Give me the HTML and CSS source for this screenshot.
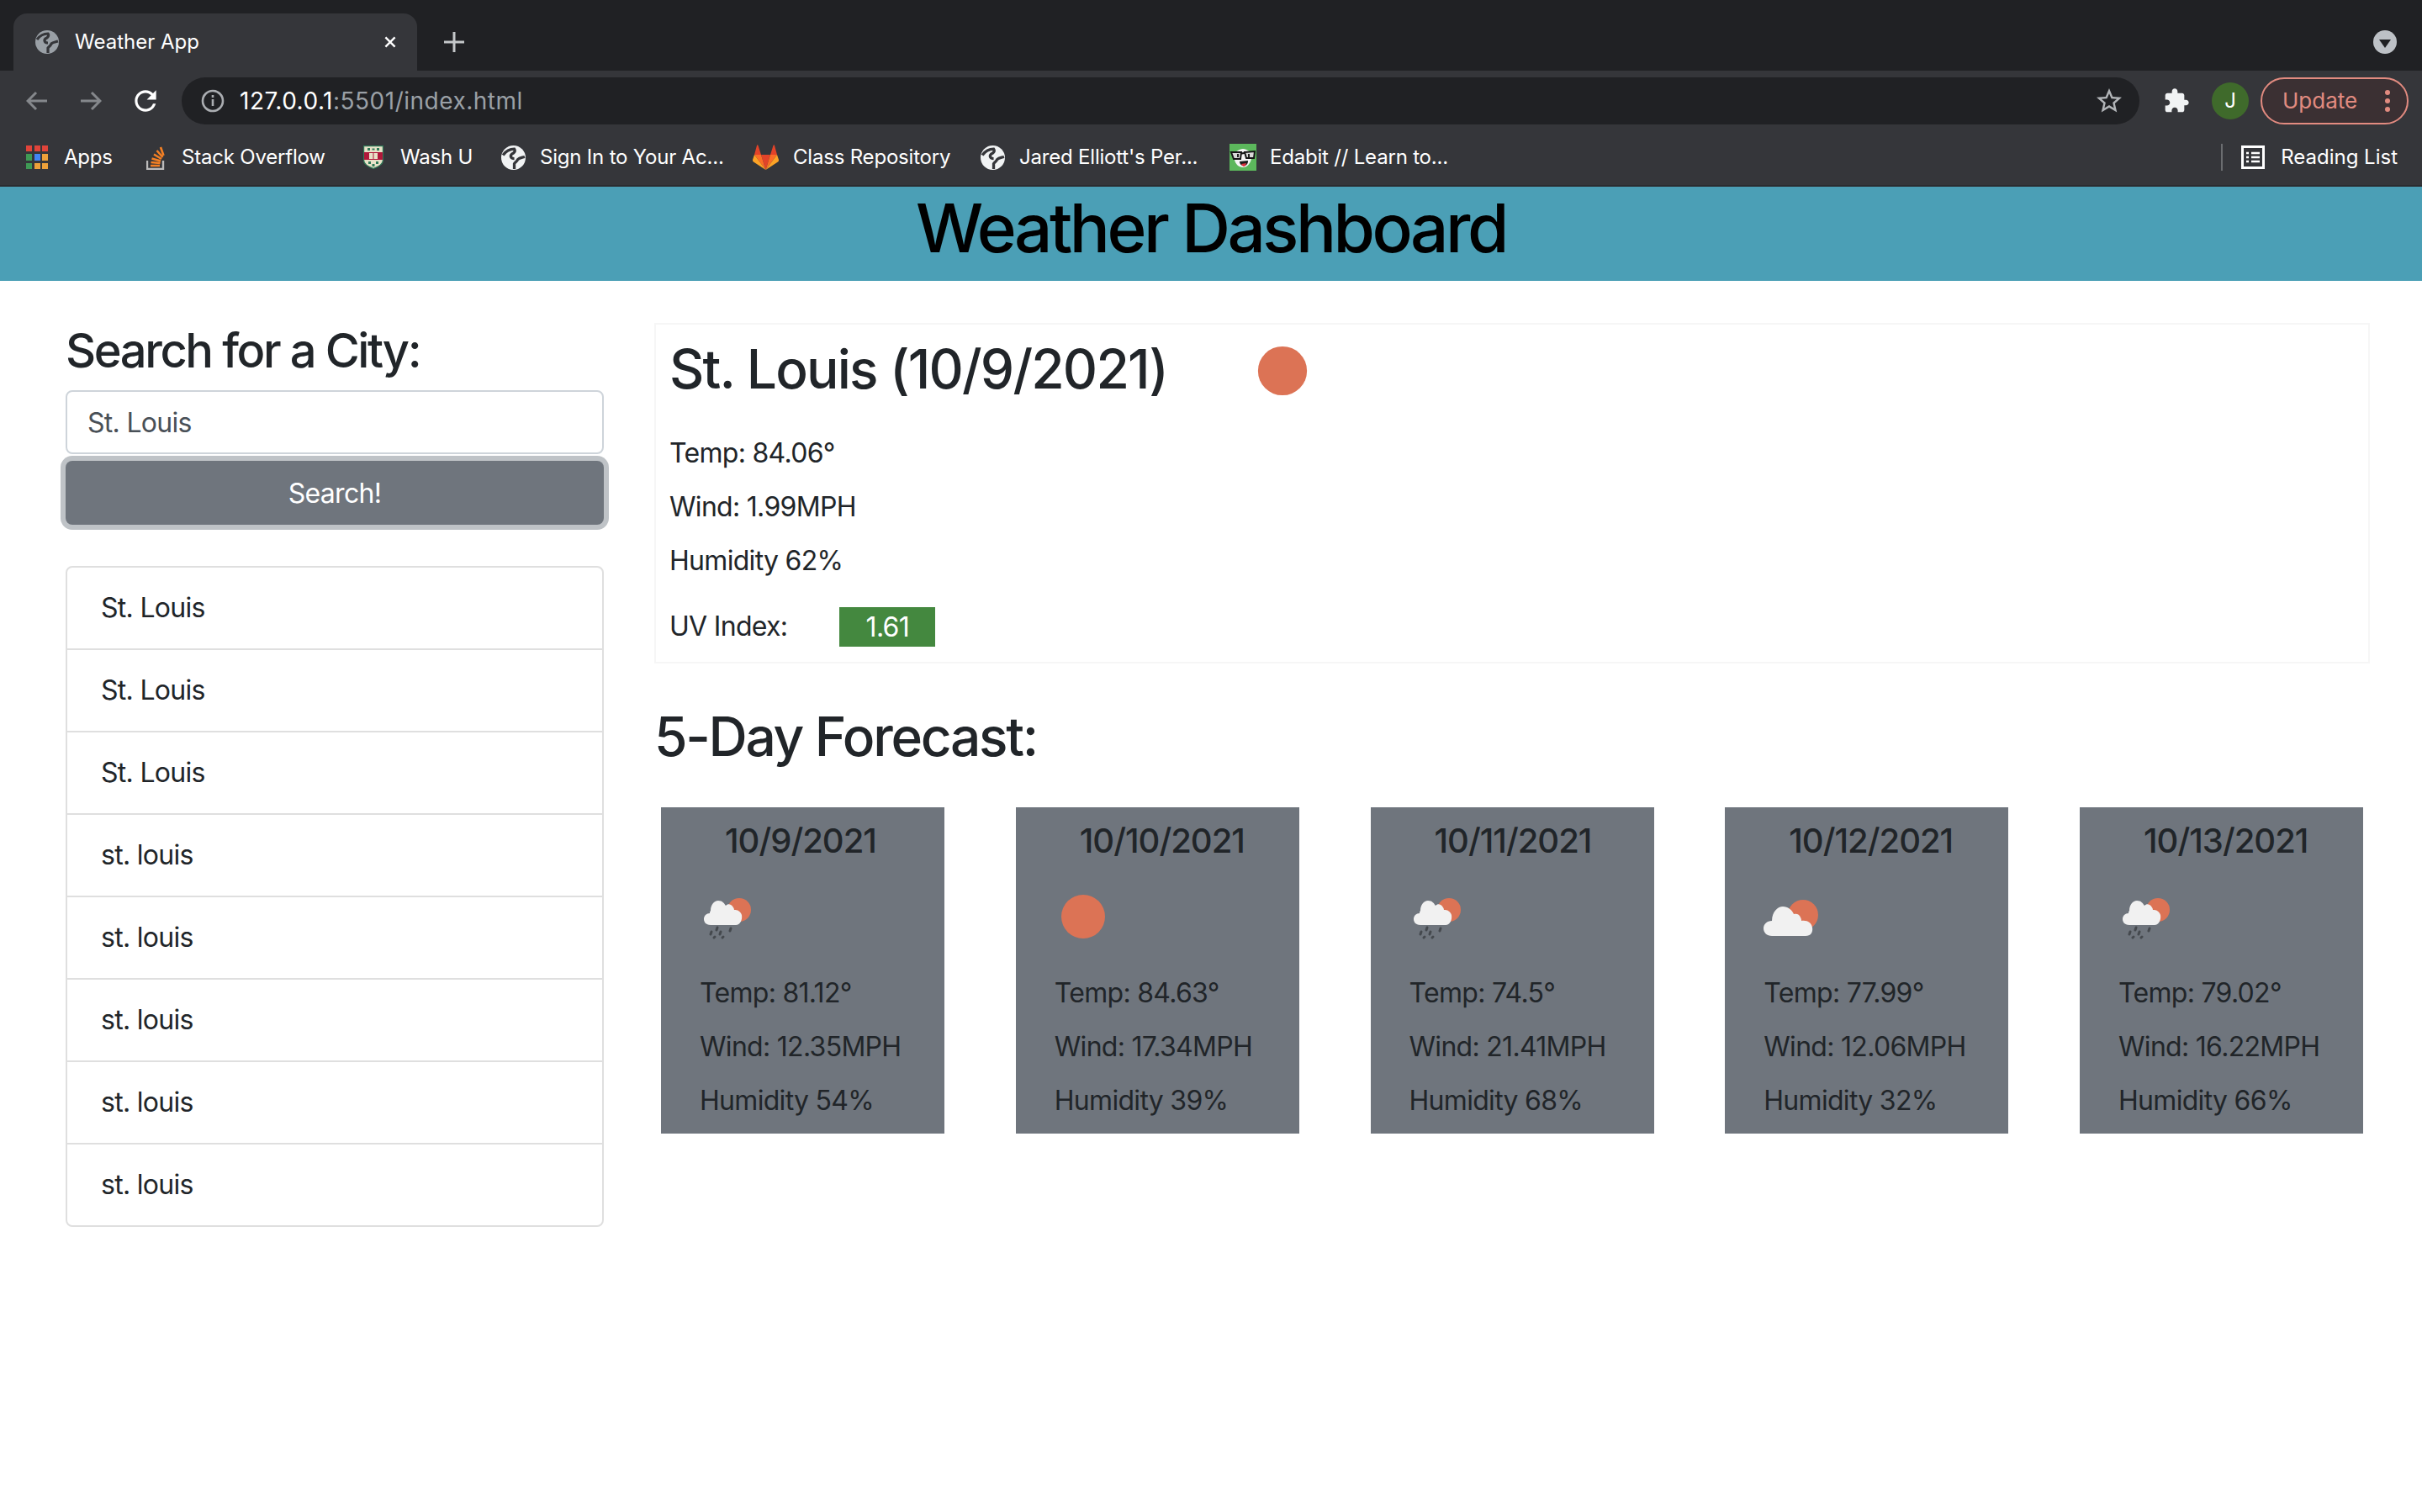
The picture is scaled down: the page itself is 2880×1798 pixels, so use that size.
FILE: index.html
```html
<!DOCTYPE html>
<html>
<head>
  <title>Weather App</title>
  <link rel="stylesheet" href="styles.css">
</head>
<body>

<svg class="defs" width="0" height="0">
  <symbol id="globe" viewBox="0 0 28 28">
    <circle cx="14" cy="14" r="14" fill="currentColor"/>
    <path fill="none" stroke="var(--hole)" stroke-width="3.200" d="M2 11C5 7 9 4 15 4c2 3-1 5-3 6-2 2-1 5 3 5M27 13c-3 1-6 1-8 3-1 3-3 3-4 5l0 6"/>
  </symbol>
  <symbol id="sun" viewBox="0 0 100 100">
    <ellipse cx="50" cy="50" rx="26" ry="26" fill="#dc7355"/>
  </symbol>
  <symbol id="rain" viewBox="0 0 100 100">
    <circle cx="63" cy="42" r="14" fill="#dc7355"/>
    <path fill="#f1f1f1" d="M29 60c-6 0-8-4-8-7 0-4 3-7 7-7 0-1 0-2 1-3 0-7 4-12 9-12 5 0 7 3 9 6 2-2 4-2 6-1 2 1 4 4 4 6 4 0 7 1 9 6 1 6-2 12-7 12z"/>
    <path stroke="#45494e" stroke-width="3" stroke-linecap="round" d="M37 63l-1 3M30 68l-1 3M41 68l-1 3M53 64l-1 3M34 74l-1 1M44 74l-1 1"/>
  </symbol>
  <symbol id="cloud" viewBox="0 0 100 100">
    <circle cx="63" cy="48" r="18" fill="#dc7355"/>
    <path fill="#f1f1f1" d="M26 73c-6 0-10-4-10-9s4-9 10-9c0-11 7-17 13-17 6 0 11 4 13 9 3-1 7 0 8 4 1 2 1 3 1 4 7-1 12 2 13 8 1 6-2 10-8 10z"/>
  </symbol>
</svg>

<div class="tabstrip">
  <div class="tab">
    <svg class="favicon"><use href="#globe"/></svg>
    <span class="tab-title">Weather App</span>
    <svg class="tab-close" viewBox="0 0 20 20"><path d="M3 3l14 14M17 3L3 17"/></svg>
  </div>
  <svg class="new-tab" viewBox="0 0 24 24"><path d="M12 0v24M0 12h24"/></svg>
  <div class="tab-menu"><span class="tab-menu-arrow"></span></div>
</div>

<div class="toolbar">
  <svg class="nav nav-back" viewBox="0 0 26 24"><path d="M25 12H2M12 2L2 12l10 10"/></svg>
  <svg class="nav nav-fwd" viewBox="0 0 26 24"><path d="M1 12h23M14 2l10 10-10 10"/></svg>
  <svg class="reload" viewBox="0 0 24 24"><path d="M17.65 6.35C16.2 4.9 14.21 4 12 4c-4.42 0-7.99 3.58-7.99 8s3.57 8 7.99 8c3.73 0 6.84-2.55 7.73-6h-2.08c-.82 2.33-3.04 4-5.65 4-3.31 0-6-2.69-6-6s2.69-6 6-6c1.66 0 3.14.69 4.22 1.78L13 11h7V4l-2.35 2.35z"/></svg>
  <div class="omnibox">
    <svg class="info" viewBox="0 0 28 28"><circle cx="14" cy="14" r="12"/><path d="M14 12v8M14 7v3"/></svg>
    <span class="url"><span class="url-host">127.0.0.1</span>:5501/index.html</span>
    <svg class="star" viewBox="0 0 24 24"><path d="M22 9.24l-7.19-.62L12 2 9.19 8.63 2 9.24l5.46 4.73L5.82 21 12 17.27 18.18 21l-1.63-7.03L22 9.24zM12 15.4l-3.76 2.27 1-4.28-3.32-2.88 4.38-.38L12 6.1l1.71 4.04 4.38.38-3.32 2.88 1 4.28L12 15.4z"/></svg>
  </div>
  <svg class="puzzle" viewBox="0 0 24 24"><path d="M20.5 11H19V7c0-1.1-.9-2-2-2h-4V3.5C13 2.12 11.88 1 10.5 1S8 2.12 8 3.5V5H4c-1.1 0-1.99.9-1.99 2v3.8H3.5c1.49 0 2.7 1.21 2.7 2.7s-1.21 2.7-2.7 2.7H2V20c0 1.1.9 2 2 2h3.8v-1.5c0-1.49 1.21-2.7 2.7-2.7 1.49 0 2.7 1.21 2.7 2.7V22H17c1.1 0 2-.9 2-2v-4h1.5c1.38 0 2.5-1.12 2.5-2.5S21.88 11 20.5 11z"/></svg>
  <div class="avatar">J</div>
  <div class="update">
    <span>Update</span>
    <span class="update-dots"><i></i><i></i><i></i></span>
  </div>
</div>

<div class="bookmarks">
  <div class="bm bm-apps">
    <svg class="bm-icon" width="26" height="28" viewBox="0 0 26 28">
      <g fill="#e0443a"><rect width="7" height="7"/><rect x="10" width="7" height="7"/><rect x="19" width="7" height="7"/></g>
      <rect y="10" width="7" height="8" fill="#3f9a55"/><rect x="10" y="10" width="7" height="8" fill="#4285f4"/><rect x="19" y="10" width="7" height="8" fill="#eda13a"/>
      <rect y="21" width="7" height="7" fill="#3f9a55"/><rect x="10" y="21" width="7" height="7" fill="#eda13a"/><rect x="19" y="21" width="7" height="7" fill="#eda13a"/>
    </svg>
    <span>Apps</span>
  </div>
  <div class="bm bm-so">
    <svg class="bm-icon" width="22" height="30" viewBox="0 0 22 30">
      <path d="M1 19v10h19V19" fill="none" stroke="#bcbbbb" stroke-width="2.4"/>
      <path stroke="#f48024" stroke-width="2.6" fill="none" d="M5 25h11M5.500 21l11 1M6.500 16.500l10.500 3M9 11.500l9 5.500M12.500 7l7 8M17 3l3.500 10"/>
    </svg>
    <span>Stack Overflow</span>
  </div>
  <div class="bm bm-wash">
    <svg class="bm-icon" width="24" height="28" viewBox="0 0 24 28">
      <path fill="#e8e2c8" stroke="#2f7a58" stroke-width="1.200" d="M.6.600h22.800v17c0 5-6 8-11.400 9.800C6.600 25.600.6 22.600.6 17.600z"/>
      <path fill="#2f7a58" d="M5 3h3v3H5zM16 3h3v3h-3zM10.500 3.500h3v2h-3zM6 19h3v3H6zM15 19h3v3h-3zM10.500 22h3v3h-3z"/>
      <path fill="#b0183a" d="M1 8h22v9H1z"/>
      <rect x="7" y="9" width="10" height="7" fill="#e8e2c8"/>
      <path stroke="#b0183a" d="M12 9v7"/>
    </svg>
    <span>Wash U</span>
  </div>
  <div class="bm bm-globe1">
    <svg class="bm-icon bm-globe-icon"><use href="#globe"/></svg>
    <span>Sign In to Your Ac...</span>
  </div>
  <div class="bm bm-gitlab">
    <svg class="bm-icon" width="31" height="30" viewBox="0 0 31 30">
      <path fill="#e24329" d="M15.500 30L10 12h11z"/>
      <path fill="#fc6d26" d="M15.500 30L10 12H2zM15.500 30L21 12h8z"/>
      <path fill="#fca326" d="M2 12L0 18c0 1 0 2 1 2.500L15.500 30zM29 12l2 6c0 1 0 2-1 2.500L15.500 30z"/>
      <path fill="#e24329" d="M2 12L5 1c0-1 1-1 1.500 0L10 12zM29 12L26 1c0-1-1-1-1.500 0L21 12z"/>
    </svg>
    <span>Class Repository</span>
  </div>
  <div class="bm bm-globe2">
    <svg class="bm-icon bm-globe-icon"><use href="#globe"/></svg>
    <span>Jared Elliott's Per...</span>
  </div>
  <div class="bm bm-edabit">
    <svg class="bm-icon" width="32" height="32" viewBox="0 0 32 32">
      <rect width="32" height="32" fill="#5cb85c"/>
      <path fill="#f6f6f6" d="M16 6c3 0 4 1 6 2 4 2 5 6 4 10-1 5-5 10-10 10S7 24 6 19C5 14 6 10 10 8c2-1 3-2 6-2z"/>
      <path fill="#d8d8d8" stroke="#151515" stroke-width="2" d="M2 10h12l-1 8H5zM18 10l12-1-1 8h-9z"/>
      <path fill="none" stroke="#151515" stroke-width="2" d="M14 12c1-1 3-1 4-1"/>
      <path fill="#222" d="M7 11h0M9 12h2v4H9zM22 12h2v4h-2z"/>
      <path fill="#1c1c1c" d="M12 21l10-1c0 4-2 6-5 6s-5-2-5-5z"/>
      <path fill="#e0303c" d="M14 24l6-1c-1 3-2 4-3 4s-2-1-3-3z"/>
    </svg>
    <span>Edabit // Learn to...</span>
  </div>
  <div class="reading">
    <svg class="reading-icon" width="28" height="28" viewBox="0 0 28 28">
      <rect x="1.500" y="1.500" width="25" height="25" fill="none" stroke="#fff" stroke-width="3"/>
      <path stroke="#fff" stroke-width="2.600" d="M6 9h3M12 9h10M6 14h3M12 14h10M6 19h3M12 19h10"/>
    </svg>
    <span class="reading-label">Reading List</span>
  </div>
</div>

<header class="page-header">
  <h1>Weather Dashboard</h1>
</header>

<main class="content">
  <aside class="sidebar">
    <h3>Search for a City:</h3>
    <input class="city-input" type="text" value="St. Louis">
    <button class="search-btn">Search!</button>
    <ul class="history">
      <li>St. Louis</li>
      <li>St. Louis</li>
      <li>St. Louis</li>
      <li>st. louis</li>
      <li>st. louis</li>
      <li>st. louis</li>
      <li>st. louis</li>
      <li>st. louis</li>
    </ul>
  </aside>

  <section class="results">
    <div class="today">
      <div class="today-head">
        <h2>St. Louis (10/9/2021)</h2>
        <svg class="today-icon"><use href="#sun"/></svg>
      </div>
      <p>Temp: 84.06°</p>
      <p>Wind: 1.99MPH</p>
      <p>Humidity 62%</p>
      <div class="uv">
        <span>UV Index:</span>
        <span class="uv-value">1.61</span>
      </div>
    </div>

    <h2 class="forecast-title">5-Day Forecast:</h2>
    <div class="forecast">
      <div class="day">
        <h4>10/9/2021</h4>
        <svg class="day-icon"><use href="#rain"/></svg>
        <p>Temp: 81.12°</p>
        <p>Wind: 12.35MPH</p>
        <p>Humidity 54%</p>
      </div>
      <div class="day">
        <h4>10/10/2021</h4>
        <svg class="day-icon"><use href="#sun"/></svg>
        <p>Temp: 84.63°</p>
        <p>Wind: 17.34MPH</p>
        <p>Humidity 39%</p>
      </div>
      <div class="day">
        <h4>10/11/2021</h4>
        <svg class="day-icon"><use href="#rain"/></svg>
        <p>Temp: 74.5°</p>
        <p>Wind: 21.41MPH</p>
        <p>Humidity 68%</p>
      </div>
      <div class="day">
        <h4>10/12/2021</h4>
        <svg class="day-icon"><use href="#cloud"/></svg>
        <p>Temp: 77.99°</p>
        <p>Wind: 12.06MPH</p>
        <p>Humidity 32%</p>
      </div>
      <div class="day">
        <h4>10/13/2021</h4>
        <svg class="day-icon"><use href="#rain"/></svg>
        <p>Temp: 79.02°</p>
        <p>Wind: 16.22MPH</p>
        <p>Humidity 66%</p>
      </div>
    </div>
  </section>
</main>

</body>
</html>
```

FILE: styles.css
```css
* { box-sizing: border-box; }
html, body { margin: 0; padding: 0; }
body { font-family: Inter, "Noto Sans", sans-serif; font-size: 32px; line-height: 48px; letter-spacing: -0.700px; color: #212529; background: #fff; height: 1798px; overflow: hidden; }
h1, h2, h3, h4, p, ul { margin: 0; padding: 0; }
.defs { display: block; height: 0; }

/* browser chrome */
.tabstrip { display: flex; align-items: flex-start; height: 84px; padding: 16px 30px 0 16px; background: #202124; letter-spacing: 0; }
.tab { display: flex; align-items: center; width: 480px; height: 68px; padding: 0 0 0 26px; background: #35363a; border-radius: 16px 16px 0 0; color: #fff; font-size: 24px; line-height: 28px; --hole: #35363a; }
.favicon { width: 28px; height: 28px; color: #9aa0a6; }
.tab-title { margin-left: 19px; flex: 1; }
.tab-close { width: 16px; height: 16px; margin-right: 24px; fill: none; stroke: #fff; stroke-width: 3; }
.new-tab { width: 24px; height: 24px; margin: 22px 0 0 32px; fill: none; stroke: #c4c7c9; stroke-width: 3; }
.tab-menu { display: flex; align-items: center; justify-content: center; width: 28px; height: 28px; margin: 20px 0 0 auto; border-radius: 50%; background: #bdc1c6; }
.tab-menu-arrow { width: 0; height: 0; margin-top: 4px; border-left: 7px solid transparent; border-right: 7px solid transparent; border-top: 10px solid #202124; }

.toolbar { display: flex; align-items: center; height: 64px; padding: 8px 16px 0 31px; background: #35363a; letter-spacing: 0; }
.nav { width: 26px; height: 24px; fill: none; stroke: #85888c; stroke-width: 3; }
.nav-fwd { margin-left: 38px; }
.reload { width: 38px; height: 38px; margin-left: 33px; fill: #fff; }
.omnibox { display: flex; align-items: center; width: 2328px; height: 56px; margin-left: 24px; padding: 0 18px 0 23px; border-radius: 28px; background: #202124; }
.info { width: 28px; height: 28px; fill: none; stroke: #aaadb1; stroke-width: 2.600; }
.url { margin-left: 18px; flex: 1; font-size: 28px; line-height: 32px; letter-spacing: 0.500px; color: #9aa0a6; }
.url-host { color: #fff; }
.star { width: 36px; height: 36px; fill: #b2b5b8; }
.puzzle { width: 32px; height: 32px; margin-left: 28px; fill: #f1f3f4; }
.avatar { display: flex; align-items: center; justify-content: center; width: 44px; height: 44px; margin-left: 26px; border-radius: 50%; background: #3f6a2b; color: #fff; font-size: 24px; }
.update { display: flex; align-items: center; justify-content: space-between; width: 176px; height: 56px; margin-left: 14px; padding: 0 20px 0 24px; border: 2px solid #e28b80; border-radius: 28px; background: #3b3033; color: #e28b80; font-size: 26px; }
.update-dots { display: flex; flex-direction: column; gap: 4px; }
.update-dots i { display: block; width: 6px; height: 6px; border-radius: 50%; background: #e28b80; }

.bookmarks { display: flex; align-items: center; height: 74px; padding: 6px 29px 0 31px; background: #35363a; border-bottom: 2px solid #2b2c30; color: #fff; font-size: 24px; line-height: 28px; letter-spacing: -0.200px; white-space: nowrap; --hole: #35363a; }
.bm { display: flex; align-items: center; flex: none; }
.bm-apps { width: 143px; gap: 19px; }
.bm-so { width: 258px; gap: 20px; }
.bm-wash { width: 164px; gap: 20px; }
.bm-globe1 { width: 299px; gap: 17px; }
.bm-gitlab { width: 271px; gap: 17px; }
.bm-globe2 { width: 296px; gap: 17px; }
.bm-edabit { width: 258px; gap: 16px; }
.bm-icon { flex: none; }
.bm-globe-icon { width: 29px; height: 29px; color: #f1f3f4; }
.reading { display: flex; align-items: center; gap: 19px; margin-left: auto; padding-left: 22px; border-left: 2px solid #6b6d70; height: 32px; }
.reading-label { letter-spacing: 0; }

/* page */
.page-header { height: 112px; background: #4b9fb6; text-align: center; }
.page-header h1 { font-size: 80px; line-height: 98px; font-weight: 500; color: #000; letter-spacing: -3.500px; }

.content { display: flex; padding: 50px 62px 0 78px; }
.sidebar { width: 640px; flex: none; }
.sidebar h3 { font-size: 56px; line-height: 67px; font-weight: 500; margin-bottom: 13px; letter-spacing: -2.400px; }
.city-input { display: block; width: 100%; height: 76px; padding: 1px 24px 0; border: 2px solid #ced4da; border-radius: 8px; font: inherit; letter-spacing: inherit; color: #495057; outline: 0; }
.search-btn { display: block; width: 100%; height: 76px; margin-top: 8px; padding: 2px 0 0; border: 0; border-radius: 8px; background: #6f757d; color: #fff; font: inherit; letter-spacing: inherit; box-shadow: 0 0 0 6px #bfc3c7; }
.history { margin-top: 49px; list-style: none; border: 2px solid #dfdfdf; border-radius: 8px; }
.history li { height: 98px; padding: 24px 40px 0; border-top: 2px solid #dfdfdf; }
.history li:first-child { height: 96px; border-top: 0; }

.results { flex: 1; margin-left: 60px; }
.today { height: 405px; padding: 0 16px; border: 2px solid #f6f6f6; }
.today-head { display: flex; align-items: flex-start; height: 129px; padding-top: 14px; }
.today-head h2 { font-size: 64px; line-height: 77px; font-weight: 500; letter-spacing: -1.800px; }
.today-icon { flex: none; width: 112px; height: 112px; margin: -15px 0 0 81px; }
.today p { margin-bottom: 16px; }
.uv { display: flex; align-items: center; margin-top: 30px; }
.uv-value { display: block; width: 114px; height: 47px; margin-left: 62px; background: #44883f; color: #fff; text-align: center; line-height: 47px; }
.forecast-title { margin: 48px 0 0; font-size: 64px; line-height: 77px; font-weight: 500; letter-spacing: -2.300px; }
.forecast { display: flex; justify-content: space-between; margin-top: 46px; padding: 0 8px; }
.day { width: 337px; height: 388px; padding: 16px 0 0 46px; background: #6f757d; }
.day h4 { margin-left: 30px; font-size: 40px; line-height: 48px; font-weight: 500; letter-spacing: -1px; }
.day-icon { display: block; width: 100px; height: 100px; margin: 16px 0 0 -16px; }
.day p { margin-bottom: 16px; }
.day-icon + p { margin-top: 17px; }
```
